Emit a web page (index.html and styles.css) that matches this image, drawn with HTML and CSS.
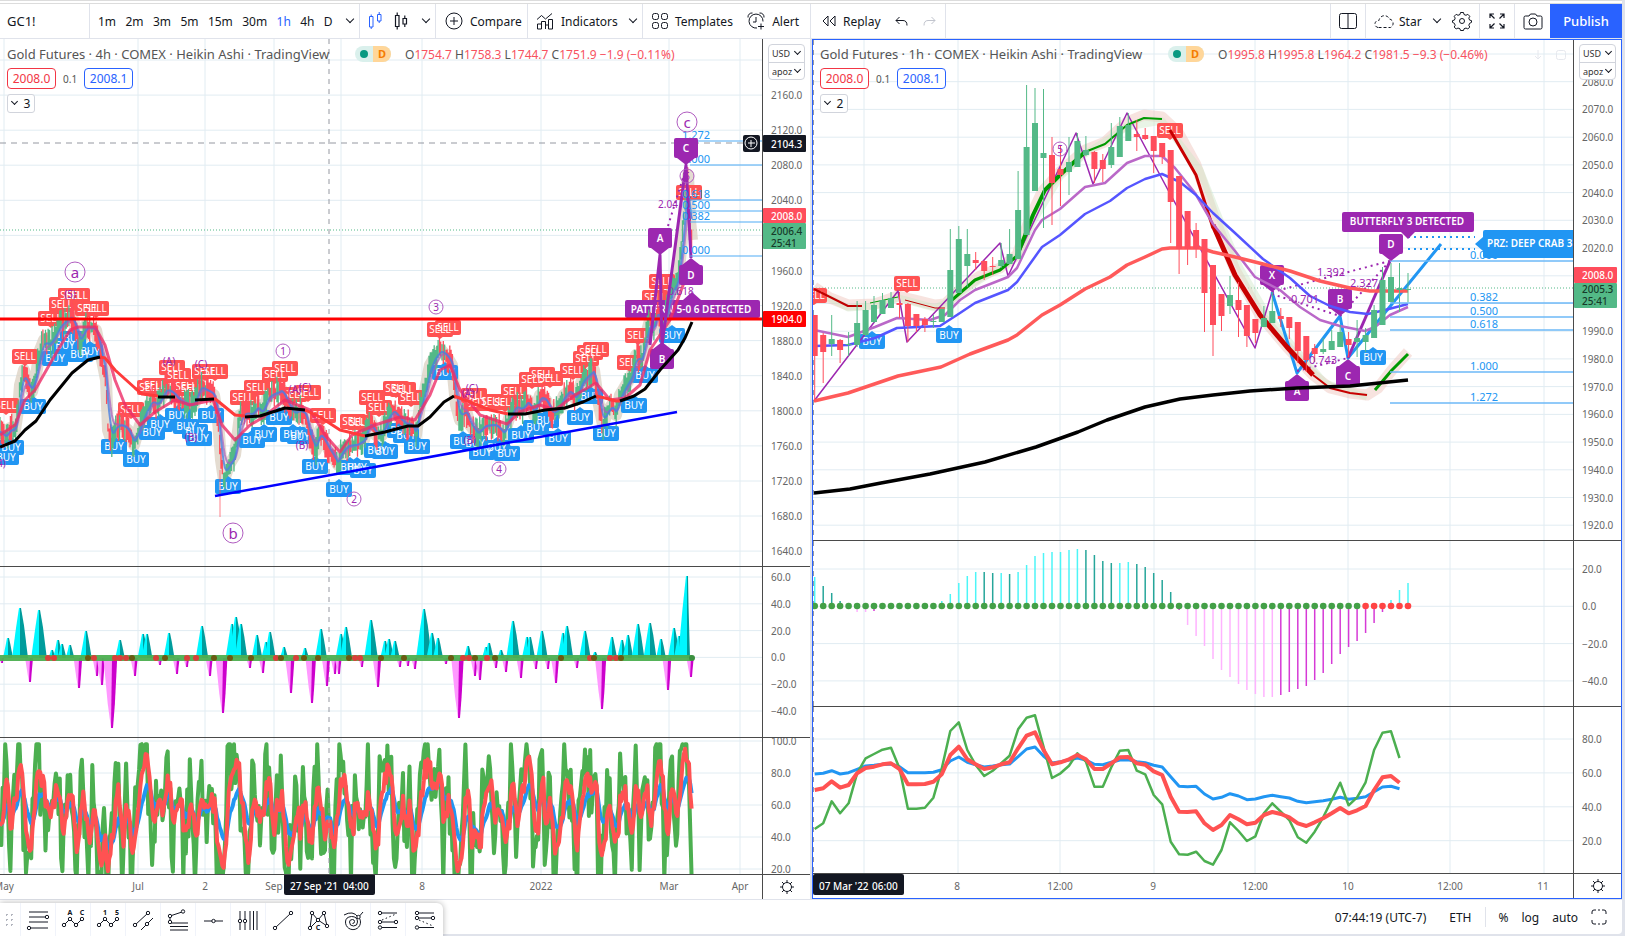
FILE: index.html
```html
<!DOCTYPE html>
<html lang="en">
<head>
    <meta charset="UTF-8">
    <meta name="viewport" content="width=device-width, initial-scale=1.0">
    <title>GC1! Gold Futures</title>
    <link rel="stylesheet" href="styles.css">
</head>
<body>
    <header class="toolbar">
        <div class="group symbol"><button class="symbol-name">GC1!</button></div>
        <div class="group intervals">
            <button>1m</button><button>2m</button><button>3m</button><button>5m</button><button>15m</button><button>30m</button><button class="active">1h</button><button>4h</button><button>D</button>
            <button class="chevron" aria-label="More intervals"></button>
        </div>
        <div class="group styles">
            <button class="active" aria-label="Heikin Ashi"><svg width="16" height="20" viewBox="0 0 16 20"><path d="M2.500 5.500h3.500v10.500H2.500zM4.200 3.500v2M4.200 16v2M10.500 3.500h3.500v6.500h-3.500zM12.200 1v2.500M12.200 10v2"/></svg></button>
            <button aria-label="Candles"><svg width="16" height="20" viewBox="0 0 16 20"><path stroke-width="1.200" d="M2.500 4.500H6v11H2.500zM4.200 1.500v3M4.200 15.500v3M10 7.500h3.500v5.500H10zM11.800 4.500v3M11.800 13v3"/></svg></button>
            <button class="chevron" aria-label="Chart types"></button>
        </div>
        <div class="group compare">
            <button><svg width="18" height="18" viewBox="0 0 18 18"><circle cx="9" cy="9" r="8"/><path d="M9 5v8M5 9h8"/></svg>Compare</button>
        </div>
        <div class="group indicators">
            <button><svg width="18" height="18" viewBox="0 0 18 18"><path d="M1.500 17v-5h4v5zM5.500 17V9.500h4V17M9.500 17v-4h3v4M12.500 17V7.500h4V17zM1 7.500l4.500-4 4 3.500L16 1.500"/></svg>Indicators</button>
            <button class="chevron" aria-label="Favorites"></button>
        </div>
        <div class="group templates">
            <button><svg width="16" height="16" viewBox="0 0 16 16"><rect x=".5" y=".5" width="6" height="6" rx="2"/><rect x="9.500" y=".5" width="6" height="6" rx="2"/><rect x=".5" y="9.500" width="6" height="6" rx="2"/><rect x="9.500" y="9.500" width="6" height="6" rx="2"/></svg>Templates</button>
            <button><svg width="18" height="18" viewBox="0 0 18 18"><path d="M16 9.500a7 7 0 1 0-6 6.500M9 5v5H6M1 5.500A4 4 0 0 1 5.500 1M12.500 1A4 4 0 0 1 17 5.500M14 11.500v6M11 14.500h6"/></svg>Alert</button>
        </div>
        <div class="group replay">
            <button><svg width="14" height="12" viewBox="0 0 14 12"><path d="M6 1v10L1 6zM13 1v10L8 6z"/></svg>Replay</button>
            <button aria-label="Undo"><svg width="13" height="10" viewBox="0 0 13 10"><path d="M4.500 1L1 4.500 4.500 8M1 4.500h7q4 0 4 5"/></svg></button>
            <button class="faded" aria-label="Redo"><svg width="13" height="10" viewBox="0 0 13 10"><path d="M8.500 1L12 4.500 8.500 8M12 4.500H5q-4 0-4 5"/></svg></button>
        </div>
        <div class="group layout">
            <button aria-label="Layout"><svg width="18" height="16" viewBox="0 0 18 16"><rect x=".5" y=".5" width="17" height="15" rx="2"/><path d="M9 0v16"/></svg></button>
        </div>
        <div class="group saved">
            <button class="cloud"><svg width="21" height="16" viewBox="0 0 21 16"><path stroke-dasharray="3 2" d="M4 14.500a3.500 3.500 0 0 1 1-7 5.500 5.500 0 0 1 10.500-1.500 4.500 4.500 0 0 1 1 8.500z"/></svg>Star</button>
            <button class="chevron" aria-label="Layouts"></button>
            <button aria-label="Settings"><svg width="20" height="20" viewBox="0 0 20 20"><circle cx="10" cy="10" r="2.500"/><path d="M8.500 1.500h3l.5 2 2 .8 1.800-1 2 2-1 1.800.8 2 1.900.5v1.800l-1.900.9-.8 2 1 1.700-2 2-1.800-1-2 .8-.5 1.700h-3l-.5-1.700-2-.8-1.800 1-2-2 1-1.700-.8-2-1.900-.9V9.600l1.900-.5.8-2-1-1.800 2-2 1.800 1 2-.8z"/></svg></button>
        </div>
        <div class="group full">
            <button aria-label="Fullscreen"><svg width="16" height="16" viewBox="0 0 16 16"><path stroke-width="1.200" d="M1 5V1h4M1 1l4.500 4.500M11 1h4v4M15 1l-4.500 4.500M1 11v4h4M1 15l4.500-4.500M15 11v4h-4M15 15l-4.500-4.500"/></svg></button>
        </div>
        <div class="group snap">
            <button aria-label="Snapshot"><svg width="20" height="17" viewBox="0 0 20 17"><path d="M2.500 3H6l1.500-2h5L14 3h3.500q1.500 0 1.500 1.500v10q0 1.500-1.500 1.500h-15Q1 16 1 14.500v-10Q1 3 2.500 3z"/><circle cx="10" cy="9" r="4"/></svg></button>
        </div>
        <button class="publish">Publish</button>
    </header>

    <main class="charts">
        <section class="chart chart-4h">
            <div class="legend">
                <div class="legend-row">
                    <h2>Gold Futures · 4h · COMEX · Heikin Ashi · TradingView</h2>
                    <span class="status"><i></i><b>D</b></span>
                    <span class="ohlc">O<em>1754.7</em> H<em>1758.3</em> L<em>1744.7</em> C<em>1751.9</em> <em>−1.9 (−0.11%)</em></span>
                </div>
                <div class="quote"><button class="sell">2008.0</button><span>0.1</span><button class="buy">2008.1</button></div>
                <button class="collapse"><i class="caret"></i>3</button>
            </div>
            <div class="units">
                <label><select aria-label="Currency"><option>USD</option></select></label>
                <label><select aria-label="Unit"><option>apoz</option></select></label>
            </div>
            <div class="pane price"><svg class="plot" data-pane="price4"></svg><svg class="axis" data-axis="price4"></svg></div>
            <div class="pane histogram"><svg class="plot" data-pane="hist4"></svg><svg class="axis" data-axis="hist4"></svg></div>
            <div class="pane oscillator"><svg class="plot" data-pane="osc4"></svg><svg class="axis" data-axis="osc4"></svg></div>
            <div class="pane time"><svg class="plot" data-pane="time4"></svg><button class="axis" aria-label="Scale settings"><svg width="14" height="14" viewBox="0 0 14 14"><circle cx="7" cy="7" r="4.500"/><path d="M7 0v2.500M7 11.500V14M0 7h2.500M11.500 7H14M2 2l2 2M10 10l2 2M12 2l-2 2M4 10l-2 2"/></svg></button></div>
        </section>

        <section class="chart chart-1h">
            <div class="legend">
                <div class="legend-row">
                    <h2>Gold Futures · 1h · COMEX · Heikin Ashi · TradingView</h2>
                    <span class="status"><i></i><b>D</b></span>
                    <span class="ohlc">O<em>1995.8</em> H<em>1995.8</em> L<em>1964.2</em> C<em>1981.5</em> <em>−9.3 (−0.46%)</em></span>
                </div>
                <div class="quote"><button class="sell">2008.0</button><span>0.1</span><button class="buy">2008.1</button></div>
                <button class="collapse"><i class="caret"></i>2</button>
            </div>
            <div class="pane-tools">
                <button aria-label="Move pane down"><svg width="12" height="12" viewBox="0 0 12 12"><path d="M6 1v9M3 7l3 3 3-3"/></svg></button>
                <button aria-label="Maximize"><svg width="12" height="12" viewBox="0 0 12 12"><rect x="1.500" y="1.500" width="9" height="9" rx="2"/></svg></button>
            </div>
            <div class="units">
                <label><select aria-label="Currency"><option>USD</option></select></label>
                <label><select aria-label="Unit"><option>apoz</option></select></label>
            </div>
            <div class="pane price"><svg class="plot" data-pane="price1"></svg><svg class="axis" data-axis="price1"></svg></div>
            <div class="pane histogram"><svg class="plot" data-pane="hist1"></svg><svg class="axis" data-axis="hist1"></svg></div>
            <div class="pane oscillator"><svg class="plot" data-pane="osc1"></svg><svg class="axis" data-axis="osc1"></svg></div>
            <div class="pane time"><svg class="plot" data-pane="time1"></svg><button class="axis" aria-label="Scale settings"><svg width="14" height="14" viewBox="0 0 14 14"><circle cx="7" cy="7" r="4.500"/><path d="M7 0v2.500M7 11.500V14M0 7h2.500M11.500 7H14M2 2l2 2M10 10l2 2M12 2l-2 2M4 10l-2 2"/></svg></button></div>
        </section>
    </main>

    <footer class="bottom-bar">
        <div class="drawings">
            <span class="grip"></span>
            <button aria-label="Fib retracement"><svg width="24" height="24" viewBox="0 0 24 24"><path d="M3 4h19M3 9h17M3 14h19M4 20h18"/><circle cx="21" cy="9" r="1.700"/><circle cx="3" cy="20" r="1.700"/></svg></button>
            <button aria-label="Elliott correction wave"><svg width="24" height="24" viewBox="0 0 24 24"><path d="M3 17l6-6 6 6 6-6"/><circle cx="3" cy="17" r="1.700"/><circle cx="9" cy="11" r="1.700"/><circle cx="15" cy="17" r="1.700"/><circle cx="21" cy="11" r="1.700"/><text x="9" y="7">A</text><text x="21" y="7">C</text></svg></button>
            <button aria-label="Elliott impulse wave"><svg width="24" height="24" viewBox="0 0 24 24"><path d="M3 17l6-6 6 6 6-6"/><circle cx="3" cy="17" r="1.700"/><circle cx="9" cy="11" r="1.700"/><circle cx="15" cy="17" r="1.700"/><circle cx="21" cy="11" r="1.700"/><text x="9" y="7">1</text><text x="21" y="7">5</text></svg></button>
            <button aria-label="Parallel channel"><svg width="24" height="24" viewBox="0 0 24 24"><path d="M4 17L17 5M10 22L22 10"/><circle cx="4" cy="17" r="1.700"/><circle cx="17" cy="5" r="1.700"/><circle cx="16" cy="16" r="1.700"/></svg></button>
            <button aria-label="Trend fib extension"><svg width="24" height="24" viewBox="0 0 24 24"><path d="M4 8l12-4M4 8v7h18M4 18.500h18M4 22h18"/><circle cx="4" cy="8" r="1.700"/><circle cx="17" cy="3.500" r="1.700"/><circle cx="4" cy="14" r="1.700"/></svg></button>
            <button aria-label="Horizontal line"><svg width="24" height="24" viewBox="0 0 24 24"><path d="M3 13h19"/><circle cx="12.500" cy="13" r="1.700"/></svg></button>
            <button aria-label="Fib time zone"><svg width="24" height="24" viewBox="0 0 24 24"><path d="M4 3v19M9 3v19M14 3v19M17.500 3v19M21 3v19"/><circle cx="4" cy="13" r="1.700"/><circle cx="9" cy="13" r="1.700"/></svg></button>
            <button aria-label="Trend line"><svg width="24" height="24" viewBox="0 0 24 24"><path d="M4 20L20 5"/><circle cx="4" cy="20" r="1.700"/><circle cx="20" cy="5" r="1.700"/></svg></button>
            <button aria-label="XABCD pattern"><svg width="24" height="24" viewBox="0 0 24 24"><path d="M4 20L6 5l6 7 6-7 3 13-9-6z"/><circle cx="4" cy="20" r="1.700"/><circle cx="6" cy="5" r="1.700"/><circle cx="18" cy="5" r="1.700"/><circle cx="21" cy="18" r="1.700"/><circle cx="12" cy="12" r="1.700"/><text x="12" y="22">C</text></svg></button>
            <button aria-label="Fib spiral"><svg width="24" height="24" viewBox="0 0 24 24"><path d="M3 7q9-5 14 2M17.500 9a7.500 7.500 0 1 1-13 5q0-5 6-5.500 6 0 6 5.500a4 4 0 0 1-8 0q0-2.500 3-2.500a2 2 0 0 1 0 4M16 11l6-7"/><circle cx="17.500" cy="9" r="1.700"/></svg></button>
            <button aria-label="Long position"><svg width="24" height="24" viewBox="0 0 24 24"><path d="M4 5h17M4 14h17M4 19.500h17"/><path stroke-dasharray="1.500 2.500" d="M6 12l14-6"/><circle cx="4" cy="5" r="1.700"/><circle cx="4" cy="14" r="1.700"/><circle cx="20" cy="14" r="1.700"/><circle cx="4" cy="19.500" r="1.700"/></svg></button>
            <button aria-label="Short position"><svg width="24" height="24" viewBox="0 0 24 24"><path d="M4 5h17M4 10h17M4 19.500h17"/><path stroke-dasharray="1.500 2.500" d="M6 12l14 6"/><circle cx="4" cy="5" r="1.700"/><circle cx="4" cy="10" r="1.700"/><circle cx="20" cy="10" r="1.700"/><circle cx="4" cy="19.500" r="1.700"/></svg></button>
        </div>
        <div class="session">
            <button>07:44:19 (UTC-7)</button>
            <button>ETH</button>
            <span class="divider"></span>
            <button>%</button>
            <button>log</button>
            <button>auto</button>
            <button aria-label="Maximize chart"><svg width="16" height="16" viewBox="0 0 16 16"><path d="M1 5V3q0-2 2-2h2M11 1h2q2 0 2 2v2M15 11v2q0 2-2 2h-2M5 15H3q-2 0-2-2v-2M7 1h2M7 15h2"/></svg></button>
        </div>
    </footer>

    <script src="charts.js"></script>
</body>
</html>
```
FILE: styles.css
```css
:root {
    --line: #e0e3eb;
    --text: #131722;
    --muted: #555;
    --blue: #2962ff;
    --red: #f7525f;
    --axis-width: 48px;
}

* {
    box-sizing: border-box;
}

body {
    margin: 0;
    height: 100vh;
    display: flex;
    flex-direction: column;
    padding: 0 3px 2px 0;
    background-color: var(--line);
    color: var(--text);
    font-family: "Noto Sans", "Open Sans", sans-serif;
    font-size: 12px;
    overflow: hidden;
}

button {
    display: flex;
    align-items: center;
    gap: 7px;
    padding: 0;
    border: none;
    background: none;
    color: inherit;
    font: inherit;
    cursor: pointer;
}

svg {
    display: block;
    flex: none;
}

button svg {
    fill: none;
    stroke: currentColor;
}

/* top toolbar */
.toolbar {
    display: flex;
    flex: none;
    height: 39px;
    border-top: 4px double #dcdcdc;
    border-bottom: 1px solid var(--line);
    background-color: white;
}

.group {
    display: flex;
    align-items: center;
    justify-content: space-between;
    border-right: 1px solid var(--line);
}

.symbol {
    width: 90px;
    padding-left: 7px;
    font-size: 13px;
}

.intervals {
    width: 270px;
    padding: 0 1px 0 8px;
}

.styles {
    width: 76px;
    padding: 0 1px 0 7px;
}

.compare {
    width: 92px;
    padding-left: 9px;
}

.indicators {
    width: 115px;
    padding: 0 1px 0 8px;
}

.templates {
    width: 168px;
    padding: 0 11px 0 9px;
}

.replay {
    width: 135px;
    padding: 0 9px 0 11px;
}

.layout {
    width: 36px;
    margin-left: auto;
    justify-content: center;
    border-left: 1px solid var(--line);
}

.saved {
    width: 114px;
    padding: 0 7px 0 8px;
}

.full,
.snap {
    width: 35px;
    justify-content: center;
}

.snap {
    border-right: none;
}

.cloud {
    gap: 4px;
}

.active {
    color: var(--blue);
}

.faded {
    color: #c1c4cd;
}

.chevron {
    width: 16px;
    height: 16px;
    justify-content: center;
}

.chevron::before,
.caret,
.units label::after {
    content: '';
    width: 5px;
    height: 5px;
    border: solid currentColor;
    border-width: 0 1px 1px 0;
    transform: translateY(-2px) rotate(45deg);
}

.publish {
    width: 72px;
    justify-content: center;
    background-color: var(--blue);
    color: white;
    font-size: 13px;
    font-weight: 500;
}

/* charts */
.charts {
    flex: 1;
    min-height: 0;
    display: grid;
    grid-template-columns: 1fr 1fr;
    gap: 2px;
}

.chart {
    position: relative;
    display: flex;
    flex-direction: column;
    min-width: 0;
    background-color: white;
}

.chart-1h {
    border: 1px solid var(--blue);
}

.pane {
    display: flex;
    flex-basis: 0;
    min-height: 0;
}

.pane + .pane {
    border-top: 1px solid #4a4a4a;
}

.plot {
    flex: 1;
    min-width: 0;
    width: 0;
    height: 100%;
}

.axis {
    flex: none;
    width: var(--axis-width);
    height: 100%;
    border-left: 1px solid #4a4a4a;
    justify-content: center;
}

.chart-4h .price { flex-grow: 527; }
.chart-4h .histogram { flex-grow: 170; }
.chart-4h .oscillator { flex-grow: 136; }
.chart-1h .price { flex-grow: 500; }
.chart-1h .histogram { flex-grow: 165; }
.chart-1h .oscillator { flex-grow: 166; }

.pane.time {
    flex: none;
    height: 25px;
}

.pane text {
    font-size: 10px;
    dominant-baseline: central;
}

.pane text.mid {
    text-anchor: middle;
}

.pane text.title {
    font-weight: 600;
}

.pane text.big {
    font-size: 15px;
}

.pane text.fib {
    font-size: 11px;
}

.pane text.tag {
    font-weight: 500;
}

/* legend lies over the price pane */
.legend {
    position: absolute;
    top: 6px;
    left: 7px;
    display: flex;
    flex-direction: column;
    align-items: flex-start;
    gap: 5px;
}

.chart-1h .legend {
    top: 5px;
}

.legend-row {
    display: flex;
    align-items: center;
    height: 18px;
    color: var(--muted);
    white-space: nowrap;
}

.legend h2 {
    width: 334px;
    margin: 0;
    font-size: 13px;
    font-weight: 400;
}

.status {
    display: flex;
    width: 36px;
    height: 16px;
    margin: 0 14px;
    border-radius: 8px;
    overflow: hidden;
    background-color: #daf0ec;
}

.status i {
    width: 8px;
    height: 8px;
    margin: 4px 5px;
    border-radius: 50%;
    background-color: #089981;
}

.status b {
    flex: 1;
    background-color: #ffd699;
    color: #f57c00;
    font-size: 11px;
    line-height: 16px;
    text-align: center;
}

.ohlc em {
    color: var(--red);
    font-style: normal;
}

.quote {
    display: flex;
    align-items: center;
    gap: 7px;
    color: var(--muted);
    font-size: 10px;
}

.quote button {
    width: 49px;
    height: 21px;
    justify-content: center;
    border: 1px solid;
    border-radius: 4px;
    background-color: white;
    font-size: 12px;
}

.quote .sell {
    color: #f23645;
}

.quote .buy {
    color: var(--blue);
}

.collapse {
    width: 28px;
    height: 19px;
    justify-content: center;
    border: 1px solid #d1d4dc;
    border-radius: 3px;
    background-color: white;
}

.units {
    position: absolute;
    top: 5px;
    right: 5px;
    width: 37px;
    border: 1px solid #d1d4dc;
    border-radius: 4px;
    background-color: white;
}

.chart-1h .units {
    top: 4px;
}

.units label {
    display: flex;
    align-items: center;
    gap: 2px;
    height: 17px;
    padding: 0 4px 0 3px;
}

.units label + label {
    border-top: 1px solid #d1d4dc;
}

.units label::after {
    flex: none;
    width: 4px;
    height: 4px;
}

.units select {
    flex: 1;
    min-width: 0;
    padding: 0;
    border: none;
    background: none;
    appearance: none;
    color: #333;
    font: 9px "Noto Sans", sans-serif;
}

.pane-tools {
    position: absolute;
    top: 9px;
    right: 54px;
    display: flex;
    gap: 11px;
    color: #e6e8ee;
}

/* bottom bar */
.bottom-bar {
    display: flex;
    flex: none;
    justify-content: space-between;
    height: 35px;
    border-top: 1px solid var(--line);
    border-radius: 0 0 4px 0;
    background-color: white;
}

.drawings {
    display: flex;
    height: 34px;
    margin-top: 3px;
    border-radius: 0 6px 0 0;
    background-color: white;
    box-shadow: 0 0 6px rgba(0, 0, 0, 0.3);
}

.drawings button {
    width: 35px;
    justify-content: center;
    border-left: 1px solid #f0f3fa;
}

.drawings button:last-child {
    width: 38px;
}

.drawings circle {
    fill: white;
}

.drawings text {
    fill: currentColor;
    stroke: none;
    font-size: 7px;
    font-weight: 700;
    text-anchor: middle;
}

.grip {
    width: 10px;
    height: 15px;
    margin: 9px 6px 9px 4px;
    background-image: radial-gradient(circle, #b2b5be 1px, transparent 1px);
    background-size: 5px 5px;
}

.session {
    display: flex;
    align-items: center;
    gap: 13px;
    padding-right: 15px;
}

.session button:first-child {
    margin-right: 10px;
}

.session .divider {
    width: 1px;
    height: 20px;
    background-color: var(--line);
}
```
FILE: charts.js
```js
// Each pane has a design box [x, y, width, height]; points are scaled from it to the real size.
const views = {
    price4: [0, 39, 762, 527],
    hist4: [0, 567, 762, 170],
    osc4: [0, 738, 762, 136],
    time4: [0, 875, 762, 24],
    price1: [813, 40, 760, 500],
    hist1: [813, 541, 760, 165],
    osc1: [813, 707, 760, 166],
    time1: [813, 874, 760, 24]
};

const GREEN = '#53b987';
const RED = '#ff4d5c';
const PURPLE = '#9c27b0';
const BLUE = '#2196f3';

const grid4 = [4, 138, 205, 274, 341, 422, 541, 669, 740];
const grid1 = [864, 958, 1060, 1154, 1255, 1348, 1450, 1544];

let seed = 7;
function random() {
    seed = (seed * 16807) % 2147483647;
    return seed / 2147483647;
}

function pairs(text) {
    return text.trim().split(/\s+/).map(p => p.split(',').map(Number));
}

function valueAt(points, x) {
    for (let i = 1; i < points.length; i++) {
        if (x <= points[i][0]) {
            const [x0, y0] = points[i - 1];
            const [x1, y1] = points[i];
            return y0 + (y1 - y0) * (x - x0) / (x1 - x0);
        }
    }
    return points[points.length - 1][1];
}

class Plot {
    constructor(name) {
        this.svg = document.querySelector(`[data-pane="${name}"]`);
        this.view = views[name];
        const box = this.svg.getBoundingClientRect();
        this.sx = box.width / this.view[2];
        this.sy = box.height / this.view[3];
        this.out = [];
    }
    x(v) { return +((v - this.view[0]) * this.sx).toFixed(1); }
    y(v) { return +((v - this.view[1]) * this.sy).toFixed(1); }
    path(points) {
        return points.map(p => this.x(p[0]) + ',' + this.y(p[1])).join(' ');
    }
    line(points, color, width = 1, extra = '') {
        const list = typeof points === 'string' ? pairs(points) : points;
        this.out.push(`<polyline points="${this.path(list)}" fill="none" stroke="${color}" stroke-width="${width}" stroke-linejoin="round" ${extra}/>`);
    }
    shape(points, color) {
        this.out.push(`<polygon points="${this.path(points)}" fill="${color}"/>`);
    }
    box(x0, y0, x1, y1, color, r = 0) {
        this.out.push(`<rect x="${this.x(x0)}" y="${this.y(y0)}" width="${Math.max(1, this.x(x1) - this.x(x0))}" height="${Math.max(1, this.y(y1) - this.y(y0))}" rx="${r}" fill="${color}"/>`);
    }
    text(x, y, value, color, cls = 'mid') {
        this.out.push(`<text x="${this.x(x)}" y="${this.y(y)}" fill="${color}" class="${cls}">${value}</text>`);
    }
    dot(x, y, r, fill, stroke = 'none') {
        this.out.push(`<circle cx="${this.x(x)}" cy="${this.y(y)}" r="${r}" fill="${fill}" stroke="${stroke}"/>`);
    }
    wave(x, y, value, r = 7) {
        this.dot(x, y, r, 'none', '#b05cc0');
        this.text(x, y, value, PURPLE, r > 8 ? 'mid big' : 'mid');
    }
    // signal labels: all the boxes first, so that crowded texts stay on top
    // dir is where the pointer goes: 1 down, -1 up
    signals(points, value, color, dir) {
        points.forEach(([x, y]) => {
            this.box(x - 13, y - 7, x + 13, y + 8, color, 2);
            this.shape([[x - 4, y + 7 * dir], [x + 4, y + 7 * dir], [x, y + 10 * dir]], color);
        });
        points.forEach(([x, y]) => this.text(x, y, value, 'white'));
    }
    node(x, y, value, dir) {
        this.box(x - 12, y - 10, x + 12, y + 10, PURPLE, 2);
        this.shape([[x - 9, y + 10 * dir], [x + 9, y + 10 * dir], [x, y + 17 * dir]], PURPLE);
        this.text(x, y, value, 'white', 'mid title');
    }
    grid(xs, ys) {
        const [x0, y0, w, h] = this.view;
        xs.forEach(x => this.line([[x, y0], [x, y0 + h]], '#e1ecf2'));
        ys.forEach(y => this.line([[x0, y], [x0 + w, y]], '#e1ecf2'));
    }
    crosshair(x) {
        this.line([[x, this.view[1]], [x, this.view[1] + this.view[3]]], '#9598a1', 1, 'stroke-dasharray="5 5"');
    }
    done() { this.svg.innerHTML = this.out.join(''); }
}

function drawAxis(name, labels, tags = []) {
    const svg = document.querySelector(`[data-axis="${name}"]`);
    const [, top, , height] = views[name];
    const scale = svg.getBoundingClientRect().height / height;
    const y = v => ((v - top) * scale).toFixed(1);
    let html = labels.map(([v, text]) => `<text x="8" y="${y(v)}" fill="#666">${text}</text>`).join('');
    tags.forEach(([from, to, color, lines, ink]) => {
        html += `<rect x="0" y="${y(from)}" width="43" height="${((to - from) * scale).toFixed(1)}" rx="1" fill="${color}"/>`;
        lines.forEach(([v, text]) => {
            html += `<text x="8" y="${y(v)}" fill="${ink}" font-weight="500">${text}</text>`;
        });
    });
    svg.innerHTML = html;
}

function steps(first, last, step, y, pixels) {
    const list = [];
    for (let v = first, i = 0; v >= last; v -= step, i++) {
        list.push([y + i * pixels, v.toFixed(1).replace('-', '−')]);
    }
    return list;
}

/* ---------- 4h chart ---------- */

const price4 = pairs(`0,432 6,438 10,428 15,430 18,410 20,385 24,370 28,385 32,392 36,375 40,350 44,340 50,345 55,335
    60,325 66,320 72,316 76,330 80,345 86,325 92,328 96,330 100,350 106,380 108,430 112,442 116,425 122,425 128,430
    134,445 140,425 146,410 152,400 158,405 166,388 172,392 178,400 186,405 194,405 200,385 206,390 214,395 218,420
    221,460 224,480 229,465 235,455 240,415 246,412 252,415 258,405 262,415 268,395 276,393 282,390 288,405 294,415
    300,410 306,415 310,440 316,450 320,430 326,445 332,455 338,465 342,450 348,445 356,445 364,440 370,420 376,435
    382,435 388,415 394,410 400,420 406,425 412,425 416,435 420,405 425,390 430,365 436,355 441,350 446,355 452,365
    456,405 460,420 466,410 470,425 478,435 484,425 490,425 496,425 504,435 510,415 516,405 522,410 528,400 534,415
    540,395 546,400 552,415 558,410 564,395 570,390 576,400 582,380 588,375 594,370 598,400 603,425 608,410 612,405
    616,415 620,395 626,385 632,375 636,355 642,360 646,335 650,320 654,330 658,305 661,330 664,330 666,310 672,290
    678,280 682,240 686,190 688,175 690,220 692,240`);

const sells4 = pairs(`6,405 25,356 51,318 62,304 71,295 77,295 88,308 96,308 131,409 150,387 155,385 172,367 178,375 186,386
    192,388 205,371 215,371 243,397 257,387 275,374 285,368 294,394 308,392 323,415 353,421 360,422 372,397 379,407
    396,388 403,389 411,397 440,329 448,327 474,395 477,403 492,401 505,402 514,391 532,379 542,374 550,378 573,370
    586,358 590,352 596,349 630,362 638,335 655,297 662,281 689,192`);

const buys4 = pairs(`11,447 6,457 33,406 55,358 65,345 73,338 80,354 90,351 114,446 136,459 152,432 160,424 178,415
    186,426 195,431 199,438 211,415 228,486 252,440 264,434 279,417 293,434 300,436 315,466 339,489 350,467 357,467
    363,470 377,450 385,451 400,430 406,435 417,446 445,372 463,441 475,443 482,452 497,447 507,453 521,435 536,427
    546,420 558,438 580,417 590,396 606,433 634,405 645,375 672,335`);

function drawPrice4() {
    const p = new Plot('price4');
    const rows = steps(2200, 1640, 40, 60, 35.08);
    p.grid(grid4, rows.map(r => r[0]));
    p.crosshair(329);
    p.line('0,143 743,143', '#9598a1', 1, 'stroke-dasharray="6 5"');
    p.line('0,230 762,230', GREEN, 1, 'stroke-dasharray="1 2"');

    p.line(price4, '#d8cdbd', 12, 'opacity="0.7"');
    p.signals(sells4, 'SELL', '#ff5252', 1);
    p.signals(buys4, 'BUY', BLUE, -1);
    p.box(625, 300, 760, 318, PURPLE, 2);
    p.shape([[683, 300], [701, 300], [692, 292]], PURPLE);
    p.text(691, 309, 'PATTERN 5-0 6 DETECTED', 'white', 'mid title');
    p.node(662, 359, 'B', -1);

    // price bars
    let up = [], down = [];
    for (let x = 0; x < 692; x += 1.3) {
        const y = valueAt(price4, x);
        const rising = valueAt(price4, x + 3) + random() * 10 - 5 < y;
        const bar = `M${p.x(x)},${p.y(y - 4 - random() * 12)}V${p.y(y + 4 + random() * 12)}`;
        (rising ? up : down).push(bar);
    }
    p.out.push(`<path d="${down.join('')}" stroke="${RED}" stroke-width="1.3"/>`);
    p.out.push(`<path d="${up.join('')}" stroke="${GREEN}" stroke-width="1.3"/>`);
    p.line('220,470 220,517', RED, 1, 'opacity="0.7"');

    // fast averages
    const fast = [], mid = [];
    let a = 432, b = 432;
    for (let x = 0; x < 692; x += 1.3) {
        const y = valueAt(price4, x);
        a += (y - a) * 0.4;
        b += (y - b) * 0.25;
        fast.push([x, a]);
        mid.push([x, b]);
    }
    p.line(mid, '#a45cc0', 2, 'opacity="0.7"');
    p.line(fast, '#4a7fe0', 2, 'opacity="0.8"');
    p.line('0,435 15,425 25,400 35,390 55,355 70,330 78,327 95,327 105,345 115,380 125,405 140,425 155,412 175,400 190,405 213,400 222,425 235,440 250,425 262,418 285,400 310,410 325,435 340,452 352,435 375,425 400,417 415,420 430,395 440,370 450,365 460,390 480,415 507,424 520,412 540,405 555,410 575,395 596,383 610,400 625,398 640,385 650,350 670,320 685,280 692,260', '#ee2d68', 3, 'opacity="0.8"');

    // slow average, red while it falls and black while it rises
    ['100,357 105,358 115,370 135,388 142,394 158,396', '214,398 235,415 245,416', '305,410 320,417 340,430 365,436',
        '454,396 470,402 490,410 508,414', '596,396 605,398 616,401 620,401'].forEach(s => p.line(s, '#ff3b3b', 3));
    ['0,447 15,441 25,430 36,421 50,400 72,373 88,360 100,357', '158,397 175,397', '195,400 214,399', '245,417 260,416 285,408 305,410',
        '365,436 385,432 400,428 408,426 418,426 430,417 444,402 454,396', '508,414 525,414 545,410 565,408 583,402 596,396',
        '620,401 634,396 645,389 660,370 678,350 685,338 692,322'].forEach(s => p.line(s, 'black', 3));
    p.line('0,319 762,319', '#ff0000', 3);
    p.line('215,496 677,412', '#0000ff', 2.5);

    // 5-0 pattern
    p.line('650,345 660,255 662,345 686,165 691,258', PURPLE, 3);
    p.line('668,226 686,168', PURPLE, 2, 'stroke-dasharray="2 4"');
    p.text(668, 204, '2.04', PURPLE);
    [[141, '1.272'], [165, '1.000'], [200, '0.618'], [211, '0.500'], [222, '0.382'], [256, '0.000']].forEach(([y, name]) => {
        p.line([[690, y], [762, y]], '#4fabf5', 1);
        p.text(696, y - 7, name, BLUE, 'mid fib');
    });
    p.node(660, 238, 'A', 1);
    p.node(686, 148, 'C', 1);
    p.node(691, 275, 'D', -1);
    p.text(681, 291, '0.618', PURPLE);

    [[70, 294, '(5)'], [169, 361, '(A)'], [201, 364, '(C)'], [191, 437, '(B)'], [295, 389, '(A)'], [305, 387, '(C)'],
        [302, 445, '(B)'], [472, 388, '(C)'], [468, 393, '(A)'], [470, 440, '(B)'], [0, 463, '(4)']].forEach(a => p.text(...a, PURPLE));
    p.wave(75, 272, 'a', 10);
    p.wave(233, 533, 'b', 10);
    p.wave(687, 122, 'c', 10);
    p.wave(283, 351, '1');
    p.wave(354, 499, '2');
    p.wave(436, 307, '3');
    p.wave(499, 469, '4');
    p.wave(687, 176, '5');

    p.box(743, 135, 760, 152, '#131722', 2);
    p.dot(751, 143, 6, 'none', 'white');
    p.line('748,143 755,143', 'white');
    p.line('751,140 751,147', 'white');
    p.done();

    drawAxis('price4', rows.slice(1), [
        [135, 152, '#131722', [[144, '2104.3']], 'white'],
        [208, 223, RED, [[216, '2008.0']], 'white'],
        [223, 249, GREEN, [[231, '2006.4'], [243, '25:41']], '#173b2a'],
        [311, 327, '#ff0000', [[319, '1904.0']], 'white']
    ]);
}

function drawHist4() {
    const p = new Plot('hist4');
    const rows = steps(60, -40, 20, 577, 26.8);
    p.grid(grid4, rows.map(r => r[0]));
    p.crosshair(329);
    const peaks = pairs(`8,20 20,50 39,48 52,8 58,18 62,14 70,13 86,27 120,18 143,24 147,24 169,25 202,32 232,34 236,41 241,34 257,23 266,16
        270,26 284,11 305,10 321,29 341,24 346,31 371,38 385,17 389,19 395,17 424,49 432,25 438,20 468,12 486,11 489,15
        501,8 513,37 527,21 530,21 542,27 563,25 567,32 585,27 595,6 612,21 622,18 628,23 638,34 650,35 661,19 674,30 679,22 687,82`);
    const dips = pairs(`2,5 30,24 79,30 97,18 102,27 112,70 135,18 160,7 177,16 187,9 210,18 223,55 250,10 263,15 291,35 312,45
        327,28 335,16 339,16 362,9 378,29 400,9 408,8 415,11 446,6 459,60 475,18 480,22 496,10 506,14 521,20 536,11 548,11
        556,25 577,10 602,51 668,32 691,19`);
    peaks.forEach(([x, h]) => {
        const w = x === 687 ? 9 : 3 + h * 0.1;
        const fall = x === 687 ? 3 : w;
        p.shape([[x - w, 658], [x - w / 2, 658 - h * 0.6], [x - 1, 658 - h], [x + 1, 658 - h], [x, 658]], '#00f7ff');
        p.shape([[x, 658], [x, 658 - h], [x + 1, 658 - h], [x + fall / 2, 658 - h * 0.65], [x + fall, 658]], '#009c9c');
    });
    dips.forEach(([x, h]) => {
        const w = 3 + h * 0.08;
        p.shape([[x - w, 658], [x - w / 2, 658 + h * 0.65], [x - 1, 658 + h], [x, 658 + h], [x, 658]], '#ff99ff');
        p.shape([[x, 658], [x - 1, 658 + h], [x + 1, 658 + h], [x + w / 3, 658 + h * 0.65], [x + w * 0.6, 658]], '#cc00cc');
    });
    p.line('0,658 692,658', '#4caf50', 6, 'opacity="0.95"');
    p.dot(692, 658, 3, '#3c9040');
    pairs('48,1 54,1 88,0 94,1 115,1 120,1 126,1 132,0 156,1 165,0 187,1 196,1 214,0 230,0 251,0 276,1 281,0 296,1 304,0 318,0 349,0 355,1 360,1 381,0 404,0 451,0 463,1 469,1 475,0 487,1 495,0 561,0 590,1 594,0 610,1 616,1 621,0')
        .forEach(([x, red]) => p.dot(x, 658, 3, red ? '#d9403a' : '#6b5a12'));
    p.done();
    drawAxis('hist4', rows);
}

const stoch4 = pairs(`0,25 5,92 10,32 18,99 28,10 37,98 44,48 52,58 57,90 62,40 69,84 76,10 82,78 88,12 93,79 98,12 104,50 108,12
    114,62 119,82 122,30 126,70 131,12 137,82 146,99 152,38 158,70 163,45 168,94 173,30 178,70 184,30 190,74 194,22 200,93
    207,35 212,86 216,30 222,10 228,84 235,96 241,62 247,28 254,93 260,48 266,87 272,45 279,68 281,92 287,10 295,75 300,35
    303,87 308,12 317,86 323,30 328,66 333,12 339,84 345,86 351,30 356,82 362,40 368,95 375,12 379,75 384,88 391,84 396,20
    402,78 405,30 410,68 414,12 420,93 428,88 434,72 440,75 443,22 446,72 452,50 456,10 460,14 465,83 470,30 475,40 480,12
    482,80 489,85 494,12 499,82 505,14 511,96 517,25 523,88 530,90 535,14 541,93 546,30 550,88 554,14 563,92 570,70 577,25
    582,93 588,70 594,83 600,12 604,40 608,84 614,25 622,91 631,30 636,91 640,35 645,96 650,40 655,82 661,97 665,25 671,88
    675,45 681,98 688,97 690,25 692,22`);

function drawOsc4() {
    const p = new Plot('osc4');
    const rows = steps(100, 20, 20, 741, 32);
    p.grid(grid4, rows.map(r => r[0]));
    const level = v => 901 - v * 1.6;
    const green = [], red = [], blue = [];
    let fast = 50, slow = 50;
    for (let x = 0; x <= 692; x += 1.3) {
        const v = Math.min(98, valueAt(stoch4, x) + random() * 44 - 24);
        fast += (v - fast) * 0.3;
        slow += (v - slow) * 0.1;
        green.push([x, level(v)]);
        red.push([x, level(fast + (random() - 0.5) * 10)]);
        blue.push([x, level(slow)]);
    }
    p.line(green, '#4caf50', 4);
    p.line(blue, BLUE, 4);
    p.line(red, '#ff5252', 4);
    p.crosshair(329);
    p.done();
    drawAxis('osc4', rows);
}

/* ---------- 1h chart ---------- */

// high, body top, body bottom, low; a fifth value of 1 marks a rising bar
const candles1 = `315,315,356,402 333,335,352,383 315,339,344,356,1 339,340,350,363 332,344,345,356,1 301,323,345,347,1
    301,310,335,336,1 296,305,322,323,1 293,300,314,314,1 292,298,308,308,1 292,303,305,318 303,304,326,342
    314,314,326,332 317,319,325,332 315,321,322,328,1 309,309,322,322,1 229,270,317,317,1 226,239,293,293,1
    229,254,266,287,1 252,260,263,270 260,261,271,280 257,266,267,275 243,260,266,268,1 229,254,264,264,1
    171,210,259,259,1 85,147,235,235,1 88,123,191,191,1 89,153,158,228,1 137,155,183,225 145,169,175,206
    137,162,172,195,1 133,141,167,167,1 136,150,155,156,1 151,152,169,183 154,160,169,182 123,147,165,168,1
    117,126,157,157,1 113,125,141,141,1 120,134,137,151 128,135,139,140 136,136,151,173 143,143,157,164
    150,150,202,243 176,176,249,274 211,211,249,265 223,230,249,258 239,239,293,332 265,265,325,356
    294,294,316,331 276,295,306,314,1 282,300,310,337 305,305,336,347 319,319,333,343 306,318,327,327,1
    292,311,323,323,1 308,316,319,327 317,317,328,339 322,322,351,363 336,336,360,372 344,348,354,362
    338,349,352,354,1 330,341,350,350,1 325,332,347,347,1 332,339,345,357 320,338,342,357,1 328,335,342,352,1
    305,310,338,338,1 267,280,325,325,1 263,277,302,302,1 263,288,290,312,1 273,289,290,302,1`;

const barX = i => 814.7 + i * 8.475;

function drawPrice1() {
    const p = new Plot('price1');
    const rows = steps(2090, 1920, 10, 54, 27.72);
    p.grid(grid1, rows.map(r => r[0]));
    p.crosshair(813.5);
    p.line('813,288 1573,288', GREEN, 1, 'stroke-dasharray="1 2"');

    // ribbon
    p.line('814,287 830,298 848,305 875,304 898,296 915,300 935,305 945,304 960,290 980,276 1000,268 1017,255 1030,218 1042,192 1060,172 1085,150 1105,142 1127,122 1144,115 1162,117 1178,132 1196,165 1215,220 1235,270 1260,315 1287,347 1313,375 1330,388 1350,393 1367,395 1378,388 1392,370 1408,352', '#f0c8c0', 11, 'opacity="0.5"');
    p.line('814,290 848,308 875,306 898,298 935,308 952,300 980,280 1017,257 1033,222 1060,177 1085,154 1127,127 1162,121 1200,170 1222,225 1240,268 1265,311 1292,345 1325,383 1367,397', '#cfe6c8', 7, 'opacity="0.45"');

    p.signals([[814, 295], [907, 283], [1170, 130]], 'SELL', '#ff5252', 1);
    p.signals([[872, 341], [949, 335], [1373, 357]], 'BUY', BLUE, -1);
    p.node(1272, 275, 'X', 1);
    p.node(1297, 391, 'A', -1);
    p.node(1340, 299, 'B', 1);
    p.node(1348, 376, 'C', -1);

    // zigzag
    p.line('814,401 898,291 907,342 1000,243 1008,276 1076,133 1093,184 1127,113 1168,190 1255,348 1272,292 1297,373', PURPLE, 1.5);
    p.line('1272,292 1297,373 1340,316 1348,358 1441,244', BLUE, 3);
    p.line('1348,358 1390,261', PURPLE, 3);
    ['1272,292 1390,261', '1272,294 1340,316', '1340,316 1390,261', '1297,371 1348,358'].forEach(s => p.line(s, PURPLE, 2, 'stroke-dasharray="2 4"'));

    // averages
    p.line('814,289 830,297 848,306 862,306', '#c00000', 2);
    p.line('870,303 898,297', '#009900', 1);
    p.line('905,300 935,308 945,308', '#c00000', 1);
    p.line('952,300 975,280 1000,270 1017,256', '#009900', 3);
    p.line('1017,256 1033,215 1045,190 1060,175 1085,152', '#009900', 4);
    p.line('1085,152 1105,144 1127,125 1144,118 1162,119', '#009900', 2);
    p.line('1170,130 1196,175 1213,228', '#c80000', 3);
    p.line('1213,225 1235,275 1260,315 1287,347 1313,375', '#c80000', 5);
    p.line('1313,375 1330,388 1350,393 1367,395', '#c80000', 2);
    p.line('1375,390 1392,370 1408,354', '#009900', 3);
    p.line('814,330 848,337 875,327 897,318 930,320 945,315 960,300 975,290 1008,277 1017,268 1035,230 1042,220 1060,209 1085,187 1105,183 1127,163 1145,156 1162,156 1175,168 1195,193 1213,224 1235,251 1255,277 1280,290 1300,307 1320,320 1340,326 1365,331 1375,327 1390,315 1408,307', '#ba68c8', 2.5);
    p.line('814,346 848,345 875,338 897,328 940,326 960,313 975,303 1008,290 1017,282 1042,247 1060,235 1085,214 1110,201 1127,188 1145,179 1162,174 1180,182 1196,195 1213,213 1235,233 1263,259 1290,278 1310,296 1330,306 1350,312 1368,314 1385,310 1408,304', '#5555ff', 2.5);
    p.line('814,401 848,393 898,376 941,367 970,354 1008,340 1017,335 1042,315 1060,305 1085,289 1110,277 1127,265 1145,257 1162,249 1170,248 1200,248 1213,252 1235,257 1263,264 1290,271 1320,281 1350,288 1370,291 1408,291', '#ff5a5a', 3.5);
    p.line('814,493 850,489 881,483 930,474 985,462 1036,447 1078,432 1107,420 1145,407 1180,399 1213,395 1250,391 1297,388 1350,386 1408,380', 'black', 3.5);

    pairs(candles1).forEach(([high, top, bottom, low, up], i) => {
        const x = barX(i);
        const color = up ? GREEN : RED;
        p.line([[x, high], [x, low]], color, 1);
        p.box(x - 3, top, x + 3, bottom, color);
    });

    p.text(1331, 271, '1.392', PURPLE, 'mid fib');
    p.text(1305, 298, '0.701', PURPLE, 'mid fib');
    p.text(1364, 282, '2.327', PURPLE, 'mid fib');
    p.text(1323, 359, '0.743', PURPLE, 'mid fib');
    [[261, '0.000'], [303, '0.382'], [317, '0.500'], [330, '0.618'], [372, '1.000'], [403, '1.272']].forEach(([y, name]) => {
        p.line([[1390, y], [1573, y]], '#6cb9f7', 1.5);
        p.text(1484, y - 7, name, BLUE, 'mid fib');
    });
    p.line('1408,237 1475,237', BLUE, 2, 'stroke-dasharray="2 4"');
    p.line('1408,249 1475,249', BLUE, 2, 'stroke-dasharray="2 4"');
    p.box(1483, 230, 1580, 258, BLUE, 2);
    p.shape([[1483, 237], [1483, 251], [1475, 244]], BLUE);
    p.text(1487, 243, 'PRZ: DEEP CRAB 3', 'white', 'title');
    p.box(1342, 212, 1474, 232, PURPLE, 2);
    p.shape([[1401, 232], [1415, 232], [1408, 239]], PURPLE);
    p.text(1407, 221, 'BUTTERFLY 3 DETECTED', 'white', 'mid title');
    p.node(1391, 244, 'D', 1);
    p.wave(1060, 149, '5');
    p.done();

    drawAxis('price1', rows.slice(1).filter(r => !['2010.0', '2000.0'].includes(r[1])), [
        [267, 283, RED, [[275, '2008.0']], 'white'],
        [283, 308, GREEN, [[289, '2005.3'], [301, '25:41']], '#173b2a']
    ]);
}

function drawHist1() {
    const p = new Plot('hist1');
    const rows = steps(20, -40, 20, 569, 37.3);
    p.grid(grid1, rows.map(r => r[0]));
    p.crosshair(813.5);
    const bars = [29, 20, 13, 5, -2, -6, -6, -5, -2, 3, 3, 3, 3, 2, 2, 5, 12, 23, 30, 34, 34, 33, 33, 32, 34, 41, 50, 53, 54, 54, 56, 57, 56, 51, 45,
        43, 43, 44, 42, 39, 33, 26, 14, -4, -19, -30, -40, -53, -64, -71, -78, -84, -88, -91, -91, -89, -86, -83, -80, -74, -67,
        -58, -48, -41, -35, -27, -17, -6, 6, 16, 23];
    bars.forEach((h, i) => {
        const growing = i === 0 || Math.abs(h) >= Math.abs(bars[i - 1]);
        const color = h > 0 ? (growing && i !== 20 ? '#4df5f7' : '#26a69a') : (growing ? '#ffb3ff' : '#d63ad6');
        p.line([[barX(i), 606], [barX(i), 606 - h]], color, 1.5);
    });
    bars.forEach((h, i) => p.dot(barX(i), 606, 3.3, i < 65 ? '#43a047' : '#ff4444'));
    p.done();
    drawAxis('hist1', rows);
}

// levels are thirds of a pixel, counted down from y = 530
const osc1 = {
    green: [897, 880, 814, 850, 820, 730, 685, 672, 659, 653, 715, 836, 836, 833, 803, 715, 603, 577, 660, 705, 738, 722, 700, 677,
        598, 563, 556, 650, 744, 730, 707, 670, 695, 770, 770, 712, 662, 660, 722, 733, 795, 823, 935, 973, 974, 965, 993, 1004, 960,
        877, 903, 933, 919, 850, 820, 845, 870, 922, 938, 905, 862, 810, 758, 826, 802, 757, 660, 608, 604, 684],
    blue: [732, 730, 722, 732, 728, 718, 708, 706, 703, 702, 710, 728, 728, 728, 727, 719, 693, 681, 697, 704, 711, 708, 704, 702,
        680, 657, 651, 678, 699, 695, 690, 684, 690, 703, 704, 697, 690, 689, 695, 698, 706, 711, 740, 769, 770, 769, 792, 807, 802,
        791, 798, 809, 807, 800, 796, 800, 804, 814, 818, 815, 812, 808, 802, 808, 805, 800, 785, 771, 769, 776],
    red: [780, 775, 754, 773, 765, 730, 714, 710, 703, 700, 717, 763, 763, 762, 755, 733, 675, 650, 688, 703, 717, 712, 703, 697,
        655, 617, 607, 660, 703, 697, 688, 675, 688, 717, 717, 700, 682, 681, 700, 704, 724, 735, 800, 845, 846, 844, 880, 900, 885,
        855, 868, 883, 878, 855, 846, 852, 862, 880, 888, 877, 865, 850, 834, 850, 841, 828, 780, 742, 738, 758]
};

function drawOsc1() {
    const p = new Plot('osc1');
    const rows = steps(80, 20, 20, 739, 33.9);
    p.grid(grid1, rows.map(r => r[0]));
    p.crosshair(813.5);
    const points = list => list.map((v, i) => [barX(i), 530 + v / 3]);
    p.line(points(osc1.blue), BLUE, 3);
    p.line(points(osc1.green), '#4caf50', 2.5);
    p.line(points(osc1.red), '#ff5252', 4);
    p.done();
    drawAxis('osc1', rows);
}

function drawTime(name, labels, tagX, date, hour) {
    const p = new Plot(name);
    labels.forEach(([x, text]) => p.text(x, 886, text, '#666'));
    p.box(tagX, 874, tagX + 91, 895, '#131722', 2);
    p.text(tagX + 6, 886, date, 'white', 'tag');
    p.text(tagX + 59, 886, hour, 'white', 'tag');
    p.done();
}

function draw() {
    seed = 7;
    drawPrice4();
    drawHist4();
    drawOsc4();
    drawTime('time4', [[4, 'May'], [138, 'Jul'], [205, '2'], [274, 'Sep'], [422, '8'], [541, '2022'], [669, 'Mar'], [740, 'Apr']], 284, "27 Sep '21", '04:00');
    drawPrice1();
    drawHist1();
    drawOsc1();
    drawTime('time1', [[957, '8'], [1060, '12:00'], [1153, '9'], [1255, '12:00'], [1348, '10'], [1450, '12:00'], [1543, '11']], 813, "07 Mar '22", '06:00');
}

window.addEventListener('resize', draw);
draw();
```
